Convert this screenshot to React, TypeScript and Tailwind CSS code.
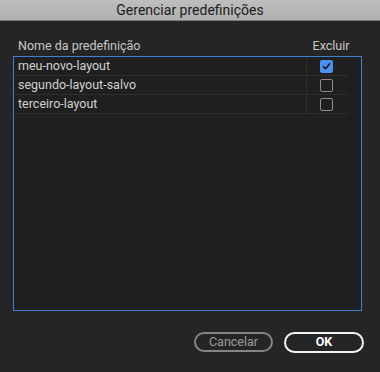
import React from 'react';

const presets = [
  { name: 'meu-novo-layout', checked: true },
  { name: 'segundo-layout-salvo', checked: false },
  { name: 'terceiro-layout', checked: false },
];

function Checkbox({ checked }: { checked: boolean }) {
  if (checked) {
    return (
      <div className="w-[13px] h-[13px] rounded-[2px] bg-[#4b8ff0] flex items-center justify-center">
        <svg width="9" height="9" viewBox="0 0 10 10" fill="none">
          <path d="M1.5 5.2 L4 7.5 L8.5 2" stroke="#1a1a1a" strokeWidth="1.8" strokeLinecap="round" strokeLinejoin="round" />
        </svg>
      </div>
    );
  }
  return <div className="w-[13px] h-[13px] rounded-[2px] border-[1.5px] border-[#8e8e8e]" />;
}

export default function App() {
  return (
    <div
      className="w-[380px] h-[372px] bg-[#252525] flex flex-col"
      style={{ fontFamily: 'Roboto, "Noto Sans", sans-serif' }}
    >
      <div className="h-[21px] bg-gradient-to-b from-[#bebebe] to-[#b0b0b0] border-b border-[#7a7a7a] flex items-center justify-center">
        <span className="text-[14px] text-[#1b1b1b] leading-none">Gerenciar predefinições</span>
      </div>

      <div className="flex-1 flex flex-col pl-[13px] pr-[18px] pt-[16px]">
        <div className="flex items-center h-[19px] text-[12.5px] text-[#c8c8c8]">
          <span className="pl-[5px] flex-1">Nome da predefinição</span>
          <span className="w-[42px] mr-[10px] text-center">Excluir</span>
        </div>

        <div className="h-[255px] border border-[#3f80d0] bg-[#1f1f1f] flex flex-col">
          {presets.map((p) => (
            <div key={p.name} className="flex h-[19px] border-b border-[#2e2e2e] mr-[12px]">
              <div className="flex-1 pl-[4px] flex items-center text-[12.5px] text-[#d2d2d2] border-r border-[#2e2e2e]">
                {p.name}
              </div>
              <div className="w-[42px] flex items-center justify-center pr-[4px]">
                <Checkbox checked={p.checked} />
              </div>
            </div>
          ))}
        </div>

        <div className="flex justify-end gap-[11px] mt-[21px] -mr-[2px]">
          <button className="w-[79px] h-[20px] rounded-full border-2 border-[#858585] text-[12.5px] text-[#9c9c9c] flex items-center justify-center leading-none">
            Cancelar
          </button>
          <button className="w-[80px] h-[21px] rounded-full border-2 border-[#f2f2f2] text-[12.5px] font-bold text-white flex items-center justify-center leading-none">
            OK
          </button>
        </div>
      </div>
    </div>
  );
}
